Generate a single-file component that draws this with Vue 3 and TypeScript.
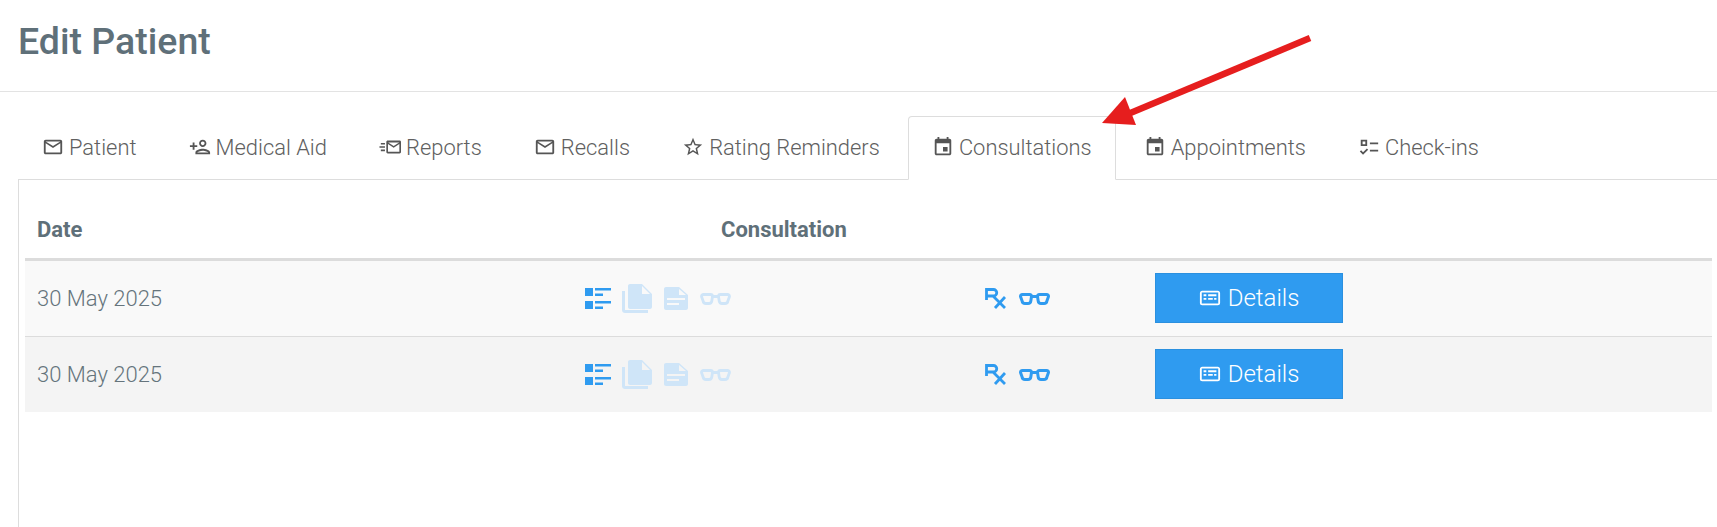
<script setup lang="ts">
interface Tab { label: string; icon: string; active?: boolean }
const mail = 'M20 4H4c-1.1 0-1.99.9-1.99 2L2 18c0 1.1.9 2 2 2h16c1.1 0 2-.9 2-2V6c0-1.1-.9-2-2-2zm0 14H4V8l8 5 8-5v10zm-8-7L4 6h16l-8 5z'
const event = 'M17 12h-5v5h5v-5zM16 1v2H8V1H6v2H5c-1.11 0-1.99.9-1.99 2L3 19c0 1.1.89 2 2 2h14c1.1 0 2-.9 2-2V5c0-1.1-.9-2-2-2h-1V1h-2zm3 18H5V8h14v11z'
const tabs: Tab[] = [
  { label: 'Patient', icon: mail },
  { label: 'Medical Aid', icon: 'M15 12c2.21 0 4-1.79 4-4s-1.79-4-4-4-4 1.79-4 4 1.79 4 4 4zm0-6c1.1 0 2 .9 2 2s-.9 2-2 2-2-.9-2-2 .9-2 2-2zm0 8c-2.67 0-8 1.34-8 4v2h16v-2c0-2.66-5.33-4-8-4zm-6 4c.22-.72 3.31-2 6-2 2.7 0 5.8 1.29 6 2H9zm-3-3v-3h3v-2H6V7H4v3H1v2h3v3h2z' },
  { label: 'Reports', icon: 'M22.500 5h-13C8.700 5 8 5.700 8 6.500v11c0 .8.7 1.500 1.500 1.500h13c.8 0 1.500-.7 1.500-1.500v-11C24 5.700 23.300 5 22.500 5zm-.3 12.200H9.800V8.700l6.200 4 6.200-4zM16 11l-6-4h12zM2 7.500h4.500v1.800H2zM.5 11.100h6v1.800h-6zM2 14.700h4.500v1.800H2z' },
  { label: 'Recalls', icon: mail },
  { label: 'Rating Reminders', icon: 'M22 9.240l-7.190-.620L12 2 9.190 8.630 2 9.240l5.460 4.730L5.820 21 12 17.270 18.180 21l-1.630-7.030L22 9.240zM12 15.400l-3.760 2.270 1-4.280-3.320-2.880 4.380-.380L12 6.100l1.710 4.040 4.380.380-3.320 2.880 1 4.280L12 15.400z' },
  { label: 'Consultations', icon: event, active: true },
  { label: 'Appointments', icon: event },
  { label: 'Check-ins', icon: 'M13 7h9v2h-9zM13 15h9v2h-9zM3 4h7v7H3zm2 2v3h3V6zM5.500 20.500 2 17l1.400-1.400 2.100 2.100 4.200-4.200 1.400 1.400z' },
]
const rows = [{ date: '30 May 2025' }, { date: '30 May 2025' }]
</script>

<template>
  <div class="page">
    <header class="head"><h1>Edit Patient</h1></header>
    <nav class="tabs">
      <a v-for="t in tabs" :key="t.label" class="tab" :class="{ active: t.active }">
        <svg class="tab-ico" viewBox="0 0 24 24"><path :d="t.icon" fill-rule="evenodd" /></svg>
        <span>{{ t.label }}</span>
      </a>
    </nav>
    <section class="panel">
      <div class="grid thead">
        <div class="th">Date</div>
        <div class="th th-cons">Consultation</div>
      </div>
      <div v-for="(r, i) in rows" :key="i" class="grid row" :class="i % 2 ? 'even' : 'odd'">
        <div class="date">{{ r.date }}</div>
        <div class="icons">
          <svg class="ic strong" viewBox="0 0 26 21"><path d="M0 0h8v8H0zM0 13h8v8H0zM10 0h16v2.500H10zM10 5.500h8V8h-8zM10 13h16v2.500H10zM10 18.500h8V21h-8z" /></svg>
          <svg class="ic doc" viewBox="0 0 30 29"><path fill-rule="evenodd" d="M8 0h12l10 10v13c0 1.100-.9 2-2 2H8c-1.100 0-2-.9-2-2V2c0-1.100.9-2 2-2zM20 2v8h8zM0 7h3v19h23v3H3c-1.700 0-3-1.300-3-3z" /></svg>
          <svg class="ic desc" viewBox="0 0 24 23"><path fill-rule="evenodd" d="M2 0h13l9 8v13c0 1.100-.9 2-2 2H2c-1.100 0-2-.9-2-2V2C0 .9.9 0 2 0zM15 2v6h7zM3 11v2h18v-2zM3 16v2h12v-2z" /></svg>
          <svg class="ic glass faint" viewBox="0 0 31 12"><path d="M1.500 3.500c0-1.100.9-2 2-2h7c1.100 0 2 .9 2 2l-.7 4.500c-.2 1.400-1.300 2.500-2.800 2.500H6c-1.500 0-2.700-1-2.900-2.500zM29.500 3.500c0-1.100-.9-2-2-2h-7c-1.100 0-2 .9-2 2l.7 4.500c.2 1.400 1.300 2.500 2.800 2.500h3c1.500 0 2.700-1 2.900-2.500zM12.500 3.500h6" /></svg>
        </div>
        <div class="icons rx-cell">
          <svg class="rx" viewBox="0 0 21 21"><path d="M1.500 12V1.500h7a3.200 3.200 0 0 1 0 6.500H1.500M8 8 20 20M20 9 10 20" /></svg>
          <svg class="ic glass solid" viewBox="0 0 31 12"><path d="M1.500 3.500c0-1.100.9-2 2-2h7c1.100 0 2 .9 2 2l-.7 4.500c-.2 1.400-1.300 2.500-2.800 2.500H6c-1.500 0-2.700-1-2.900-2.500zM29.500 3.500c0-1.100-.9-2-2-2h-7c-1.100 0-2 .9-2 2l.7 4.500c.2 1.400 1.300 2.500 2.800 2.500h3c1.500 0 2.700-1 2.900-2.500zM12.500 3.500h6" /></svg>
        </div>
        <div class="act">
          <button class="btn" type="button">
            <svg class="btn-ico" viewBox="0 0 24 24"><path d="M20.500 4h-17C2.100 4 1 5.100 1 6.500v11C1 18.900 2.100 20 3.500 20h17c1.400 0 2.500-1.100 2.500-2.500v-11C23 5.100 21.900 4 20.500 4zm.5 14H3V6h18zM5 8h3v2H5zM10 8h9v2h-9zM5 12h3v2H5zM10 12h5v2h-5zM16.500 12H19v2h-2.500z" fill-rule="evenodd" /></svg>
            Details
          </button>
        </div>
      </div>
    </section>
    <svg class="arrow" viewBox="0 0 230 110" aria-hidden="true">
      <path d="M220 10 38 86" stroke="#e61e1e" stroke-width="6.500" fill="none" />
      <path d="M12 95 35 69 46 97z" fill="#e61e1e" />
    </svg>
  </div>
</template>

<style>
html, body { margin: 0; background: #fff; overflow: hidden; }
</style>

<style scoped>
.page {
  position: relative;
  width: 1717px;
  height: 527px;
  overflow: hidden;
  font-family: Roboto, sans-serif;
  background: #fff;
}
.head {
  height: 92px;
  box-sizing: border-box;
  border-bottom: 1px solid #e3e3e3;
  padding: 16px 0 0 18px;
}
h1 {
  margin: 0;
  font-size: 37.500px;
  line-height: 50px;
  font-weight: 500;
  color: #5f7079;
}
.tabs {
  display: flex;
  gap: 4.100px;
  margin: 24px 0 0 18px;
  height: 64px;
  position: relative;
  z-index: 1;
}
.tab {
  display: flex;
  align-items: center;
  gap: 5px;
  padding: 0 23px 2px;
  height: 64px;
  box-sizing: border-box;
  font-size: 21.900px;
  font-weight: 300;
  color: #606060;
  border: 1px solid transparent;
}
.tab.active {
  background: #fff;
  border-color: #ddd;
  border-bottom-color: #fff;
  border-radius: 4px 4px 0 0;
}
.tab-ico { width: 22px; height: 22px; fill: #555; flex: none; overflow: visible; }
.panel {
  margin: -1px 0 0 18px;
  height: 400px;
  box-sizing: border-box;
  border-left: 1px solid #ddd;
  border-top: 1px solid #ddd;
  padding: 0 5px 0 6px;
}
.grid {
  display: grid;
  grid-template-columns: 547px 400px 183px 1fr;
  align-items: center;
}
.thead {
  height: 78px;
  border-bottom: 3px solid #dcdcdc;
}
.th {
  padding: 21px 0 0 12px;
  font-size: 22px;
  font-weight: 700;
  color: #5f7079;
}
.th-cons { grid-column: 2 / 4; padding-left: 149px; }
.row { height: 75px; border-bottom: 1px solid #dcdcdc; }
.row.odd { background: #f9f9f9; }
.row.even { background: #f4f4f4; border-bottom: 0; }
.date { padding-left: 12px; font-size: 22px; font-weight: 300; color: #65747c; }
.icons { display: flex; align-items: center; gap: 12px; padding-left: 13px; }
.ic { flex: none; }
.strong { width: 26px; height: 21px; fill: #2f9bf0; margin-right: -1px; }
.doc { width: 30px; height: 29px; fill: #cfe5f8; }
.desc { width: 24px; height: 23px; fill: #cfe5f8; }
.glass { width: 31px; height: 12px; fill: none; stroke-width: 2.800; stroke-linejoin: round; }
.faint { stroke: #cfe5f8; }
.solid { stroke: #2f9bf0; stroke-width: 3; }
.rx { width: 21px; height: 21px; fill: none; stroke: #2f9bf0; stroke-width: 2.800; flex: none; }
.rx-cell { gap: 13px; }
.act { margin-top: -2px; }
.btn {
  width: 188px;
  height: 50px;
  display: flex;
  align-items: center;
  justify-content: center;
  gap: 7px;
  background: #2f9bf0;
  border: 1px solid #2b90df;
  color: #fff;
  font-family: inherit;
  font-size: 24px;
  font-weight: 300;
  padding: 0;
}
.btn-ico { width: 22px; height: 22px; fill: #fff; }
.arrow {
  position: absolute;
  left: 1090px;
  top: 28px;
  width: 230px;
  height: 110px;
  z-index: 2;
}
</style>
